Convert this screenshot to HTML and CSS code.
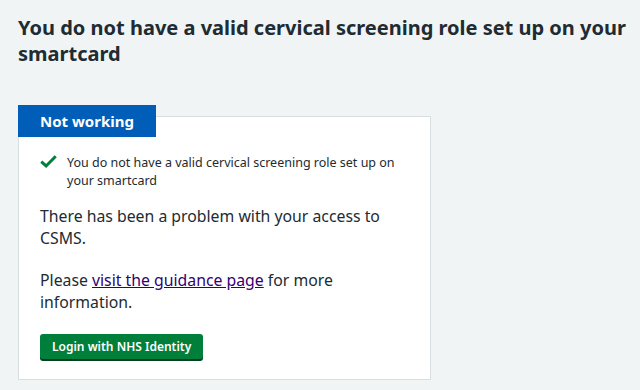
FILE: index.html
```html
<!DOCTYPE html>
<html lang="en">
<head>
<meta charset="utf-8">
<title>Not working</title>
<link rel="stylesheet" href="styles.css">
</head>
<body>
<main class="page">
  <h1 class="title">You do not have a valid cervical screening role set up on your smartcard</h1>
  <section class="panel">
    <div class="tag">Not working</div>
    <div class="panel-body">
      <ul class="checks">
        <li class="check-item">
          <svg class="check-icon" viewBox="0 0 18 14" width="17" height="13" aria-hidden="true"><path d="M1.2 7.2 L6.4 11.8 L16.8 1.4" fill="none" stroke="#007f3b" stroke-width="3.2" stroke-linecap="butt" stroke-linejoin="miter"/></svg>
          <span>You do not have a valid cervical screening role set up on your smartcard</span>
        </li>
      </ul>
      <p class="text">There has been a problem with your access to CSMS.</p>
      <p class="text">Please <a class="link" href="#">visit the guidance page</a> for more information.</p>
      <button class="btn" type="button">Login with NHS Identity</button>
    </div>
  </section>
</main>
</body>
</html>
```
FILE: styles.css
```css
html, body {
  margin: 0;
  padding: 0;
  background: #f0f4f5;
  color: #212b32;
  font-family: "Noto Sans", "Open Sans", sans-serif;
}
.page {
  padding: 15px 18px 0 18px;
}
.title {
  margin: 0;
  font-size: 20px;
  line-height: 26px;
  font-weight: 700;
  width: 620px;
}
.panel {
  margin-top: 49px;
  width: 413px;
  height: 264px;
  box-sizing: border-box;
  background: #ffffff;
  border: 1px solid #d8dde0;
}
.tag {
  width: fit-content;
  margin: -12px 0 0 -1px;
  background: #005eb8;
  color: #ffffff;
  font-weight: 700;
  font-size: 15px;
  line-height: 32px;
  height: 32px;
  padding: 0 22px;
}
.panel-body {
  padding: 17px 21px 0 21px;
}
.checks {
  list-style: none;
  margin: 0;
  padding: 0;
}
.check-item {
  display: flex;
  align-items: flex-start;
  gap: 10px;
  font-size: 12.5px;
  line-height: 17.5px;
}
.check-icon {
  flex: none;
  margin-top: 1px;
}
.text {
  margin: 16px 0 0 0;
  font-size: 15.8px;
  line-height: 22px;
}
.text + .text {
  margin-top: 20px;
}
.link {
  color: #330072;
}
.btn {
  display: block;
  margin-top: 21px;
  background: #007f3b;
  color: #ffffff;
  border: 0;
  border-radius: 3px;
  box-shadow: 0 2px 0 #00401e;
  font-family: inherit;
  font-size: 12px;
  font-weight: 600;
  height: 25px;
  padding: 0 12px;
}
```
